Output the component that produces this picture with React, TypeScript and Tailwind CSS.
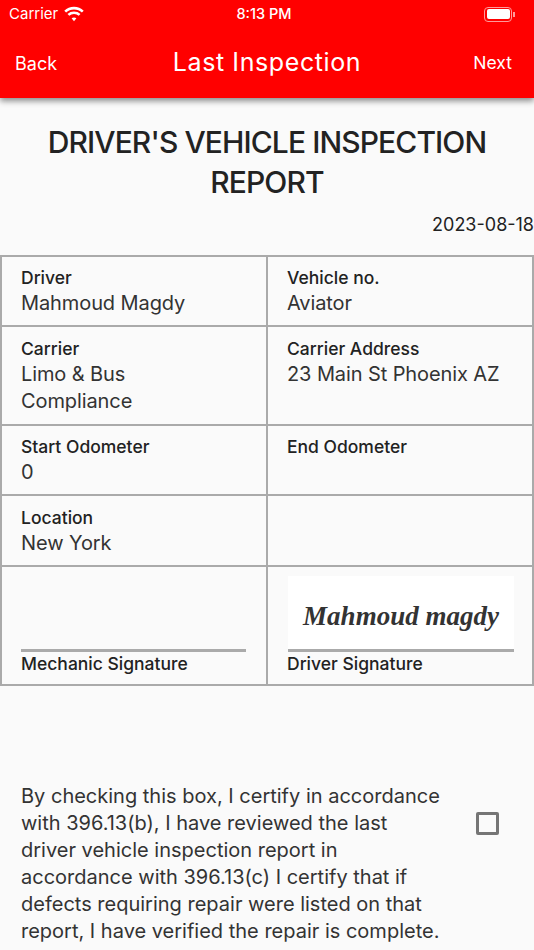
const FONT = "font-['Inter',sans-serif]";

function Cell({ label, value, right, h }: { label?: string; value?: string; right?: boolean; h: string }) {
    return (
        <div className={`${h} ${right ? 'pl-[19px]' : 'pl-[19px] border-r-2'} border-b-2 border-[#aaaaaa] pr-[16px]`}>
            {label && <div className="text-[17.5px] leading-[24px] text-[#222222] font-[450]">{label}</div>}
            {value && <div className="text-[20px] leading-[27px] tracking-[-0.1px] text-[#333333] whitespace-pre-line">{value}</div>}
        </div>
    );
}

function WifiIcon() {
    return (
        <svg width="20" height="16" viewBox="0 0 20 16" fill="none" stroke="white" strokeWidth="2.6">
            <path d="M1.2 5.6C6 1 14 1 18.8 5.6" />
            <path d="M4.4 8.9C7.4 6.1 12.6 6.1 15.6 8.9" />
            <path d="M10 15.2L7.6 12.3C8.9 11.2 11.1 11.2 12.4 12.3Z" fill="white" stroke="none" />
        </svg>
    );
}

export default function App() {
    return (
        <div className={`w-[534px] h-[950px] overflow-hidden bg-[#fafafa] ${FONT}`}>
            <div className="h-[98px] bg-[#ff0000] shadow-[0_3px_6px_rgba(0,0,0,0.45)] text-white relative">
                <div className="h-[28px] pl-[9px] pr-[19px] flex items-center justify-between text-[15px]">
                    <div className="flex items-center gap-[6px] w-[120px]">
                        <span>Carrier</span>
                        <WifiIcon />
                    </div>
                    <span className="text-[14.5px] font-medium ml-[4px]">8:13 PM</span>
                    <div className="w-[120px] flex justify-end items-center">
                        <div className="w-[28px] h-[15px] rounded-[4px] border border-[#ff9a9a] p-[1.5px]">
                            <div className="w-full h-full rounded-[2px] bg-white" />
                        </div>
                        <div className="w-[1.5px] h-[5px] bg-[#ff9a9a] ml-[1px]" />
                    </div>
                </div>
                <div className="h-[70px] px-[15px] flex items-center justify-between">
                    <span className="text-[18px] w-[90px]">Back</span>
                    <span className="text-[25px] tracking-[0.6px]">Last Inspection</span>
                    <span className="text-[17.5px] w-[90px] text-right pr-[7px]">Next</span>
                </div>
            </div>

            <h1 className="mt-[24px] px-[30px] text-center text-[30px] leading-[40px] font-medium text-[#222222] tracking-[-0.9px]">
                DRIVER'S VEHICLE INSPECTION REPORT
            </h1>
            <div className="mt-[11px] text-right text-[18px] leading-[24px] text-[#222222]">2023-08-18</div>

            <div className="mt-[18px] grid grid-cols-[266px_1fr] border-t-2 border-l-2 border-r-2 border-[#aaaaaa]">
                <Cell h="h-[70px] pt-[9px]" label="Driver" value="Mahmoud Magdy" />
                <Cell h="h-[70px] pt-[9px]" label="Vehicle no." value="Aviator" right />
                <Cell h="h-[99px] pt-[10px]" label="Carrier" value={'Limo & Bus\nCompliance'} />
                <Cell h="h-[99px] pt-[10px]" label="Carrier Address" value="23 Main St Phoenix AZ" right />
                <Cell h="h-[70px] pt-[9px]" label="Start Odometer" value="0" />
                <Cell h="h-[70px] pt-[9px]" label="End Odometer" right />
                <Cell h="h-[71px] pt-[10px]" label="Location" value="New York" />
                <Cell h="h-[71px]" right />
                <div className="h-[119px] border-r-2 border-b-2 border-[#aaaaaa] pl-[19px] pr-[20px] pt-[9px] flex flex-col">
                    <div className="h-[73px] border-b-[3px] border-[#aaaaaa] box-content" />
                    <div className="text-[17.5px] leading-[24px] font-[450] text-[#222222]">Mechanic Signature</div>
                </div>
                <div className="h-[119px] border-b-2 border-[#aaaaaa] pl-[20px] pr-[18px] pt-[9px] flex flex-col">
                    <div className="h-[73px] border-b-[3px] border-[#aaaaaa] box-content bg-white flex items-center justify-center">
                        <span className="font-['Liberation_Serif',serif] italic font-bold text-[27px] text-[#333333] pt-[8px]">Mahmoud magdy</span>
                    </div>
                    <div className="text-[17.5px] leading-[24px] font-[450] text-[#222222] -ml-[1px]">Driver Signature</div>
                </div>
            </div>

            <div className="mt-[97px] pl-[21px] flex items-start">
                <p className="w-[422px] text-[20px] leading-[27px] text-[#333333] shrink-0">
                    By checking this box, I certify in accordance with 396.13(b), I have reviewed the last driver vehicle inspection report in accordance with 396.13(c) I certify that if defects requiring repair were listed on that report, I have verified the repair is complete.
                </p>
                <div className="w-[23px] h-[23px] ml-[33px] mt-[29px] border-[3px] border-[#757575] rounded-[2px] shrink-0" />
            </div>
        </div>
    );
}
